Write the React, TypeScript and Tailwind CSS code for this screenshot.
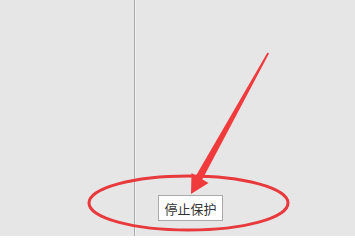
import React from "react";

export default function App() {
  return (
    <div className="relative flex w-[355px] h-[236px] overflow-hidden bg-[#e6e6e6]" style={{ fontFamily: '"Microsoft YaHei", "Noto Sans CJK SC", sans-serif' }}>
      <div className="w-[135px] h-full border-r border-[#aaaaaa]" />
      <div className="w-px h-full bg-[#f0f0f0]" />
      <div className="flex-1 flex flex-col justify-end pl-[22px] pb-[15px]">
        <button className="w-[65px] h-[26px] bg-white border border-[#a9a9a9] text-[13px] text-[#333333] leading-none flex items-center justify-center" style={{ fontFamily: '"Noto Sans CJK SC", sans-serif' }}>
          停止保护
        </button>
      </div>
      <svg className="absolute inset-0 pointer-events-none" width="355" height="236" viewBox="0 0 355 236">
        <ellipse cx="188.5" cy="203" rx="99.5" ry="27" fill="none" stroke="#e8393c" strokeWidth="3" />
        <polygon points="267.5,52.5 269,53.5 202,180 195.5,176.5" fill="#f03a3c" />
        <polygon points="191,194 191.5,173 208.5,183" fill="#f03a3c" />
      </svg>
    </div>
  );
}
